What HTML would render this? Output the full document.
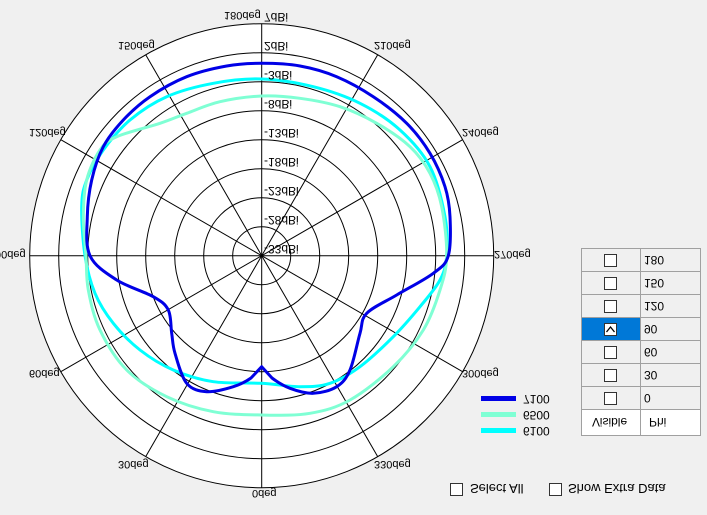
<!DOCTYPE html>
<html><head><meta charset="utf-8"><style>
html,body{margin:0;padding:0;background:#f0f0f0;width:707px;height:515px;overflow:hidden}
svg{display:block}
text{font-family:"Liberation Sans",sans-serif;fill:#000}
</style></head><body>
<svg id="s" width="707" height="515" viewBox="0 0 707 515">
<rect width="707" height="515" fill="#f0f0f0"/>
<g fill="none" stroke="#000" stroke-width="1">
<circle cx="261.7" cy="255.7" r="232" fill="#fff"/>
<circle cx="261.7" cy="255.7" r="203"/>
<circle cx="261.7" cy="255.7" r="174"/>
<circle cx="261.7" cy="255.7" r="145"/>
<circle cx="261.7" cy="255.7" r="116"/>
<circle cx="261.7" cy="255.7" r="87"/>
<circle cx="261.7" cy="255.7" r="58"/>
<circle cx="261.7" cy="255.7" r="29"/>
<line x1="29.7" y1="255.7" x2="493.7" y2="255.7"/>
<line x1="261.7" y1="23.7" x2="261.7" y2="487.7"/>
<line x1="145.7" y1="54.8" x2="377.7" y2="456.6"/>
<line x1="377.7" y1="54.8" x2="145.7" y2="456.6"/>
<line x1="60.8" y1="139.7" x2="462.6" y2="371.7"/>
<line x1="462.6" y1="139.7" x2="60.8" y2="371.7"/>
</g>
<g fill="none" stroke-width="3" stroke-linejoin="round" class="curves">
<polygon stroke="#00ffff" points="261.7,79 213.3,83.3 166.7,96.7 130,120 103.3,150 86.7,180 81.7,206.7 85,255.7 95,293.3 113.3,323.3 140,350 173.3,370 213.3,381.7 261.7,383.3 300,386.7 330,383.3 360,366.7 393.3,336.7 420,306.7 440,280 446.7,255.7 445,216.7 430,166.7 400,130 360,103.3 313.3,86.7"/>
<polygon stroke="#7fffd4" points="261.7,96 300,98.3 340,106.7 376.7,123.3 410,146.7 430,173.3 441.7,206.7 446.7,255.7 440,290 423.3,330 393.3,366.7 350,400 310,413.3 261.7,415 213.3,411.7 166.7,396.7 126.7,370 100,330 88.3,290 86,255.7 83.3,216.7 86.7,180 100,150 116.7,136.7 160,123.3 186.7,113.3 220,101.7"/>
<polygon stroke="#0000e6" points="90,255.7 87.3,216.7 91.7,180 103.3,146.7 123.3,120 150,96.7 186.7,76.7 226.7,66 261.7,63.3 300,66 336.7,76.7 373.3,96.7 406.7,123.3 430,153.3 445,186.7 450,216.7 448.3,255.7 433.3,273.3 396.7,295 366.7,313.3 360,333.3 350,370 336.7,386.7 313.3,393.3 290,388.3 272,378 261.7,366.7 251,378 233.3,386.7 206.7,391.7 186.7,383.3 175,353.3 171.7,333.3 168.3,310 153.3,296.7 116.7,280"/>
</g>
<g font-size="12">
<text transform="translate(264,13) scale(1,-1)">7dBi</text>
<text transform="translate(264,42) scale(1,-1)">2dBi</text>
<text transform="translate(264,71) scale(1,-1)">-3dBi</text>
<text transform="translate(264,100) scale(1,-1)">-8dBi</text>
<text transform="translate(264,129) scale(1,-1)">-13dBi</text>
<text transform="translate(264,158) scale(1,-1)">-18dBi</text>
<text transform="translate(264,187) scale(1,-1)">-23dBi</text>
<text transform="translate(264,216) scale(1,-1)">-28dBi</text>
<text transform="translate(264,245) scale(1,-1)">-33dBi</text>
</g>
<g font-size="11">
<text transform="translate(224,12) scale(1,-1)">180deg</text>
<text transform="translate(252,490) scale(1,-1)">0deg</text>
<text transform="translate(-5,251) scale(1,-1)">90deg</text>
<text transform="translate(494,251) scale(1,-1)">270deg</text>
<text transform="translate(118,461) scale(1,-1)">30deg</text>
<text transform="translate(374,461) scale(1,-1)">330deg</text>
<text transform="translate(29,370) scale(1,-1)">60deg</text>
<text transform="translate(462,370) scale(1,-1)">300deg</text>
<text transform="translate(29,129) scale(1,-1)">120deg</text>
<text transform="translate(462,129) scale(1,-1)">240deg</text>
<text transform="translate(118,42) scale(1,-1)">150deg</text>
<text transform="translate(374,42) scale(1,-1)">210deg</text>
</g>
<rect x="481" y="396" width="35" height="5" fill="#0000e6"/>
<rect x="481" y="412" width="35" height="5" fill="#7fffd4"/>
<rect x="481" y="428" width="35" height="5" fill="#00ffff"/>
<g font-size="12">
<text transform="translate(523,395) scale(1,-1)">7100</text>
<text transform="translate(523,411) scale(1,-1)">6500</text>
<text transform="translate(523,427) scale(1,-1)">6100</text>
</g>
<rect x="581.5" y="248.5" width="119" height="187" fill="#f0f0f0" stroke="#a0a0a0"/>
<rect x="582" y="409" width="118" height="26" fill="#fff"/>
<rect x="582" y="318" width="58" height="22" fill="#0078d7"/>
<g stroke="#a0a0a0" stroke-width="1">
<line x1="640.5" y1="248" x2="640.5" y2="435"/>
<line x1="581" y1="271.5" x2="701" y2="271.5"/>
<line x1="581" y1="294.5" x2="701" y2="294.5"/>
<line x1="581" y1="317.5" x2="701" y2="317.5"/>
<line x1="581" y1="340.5" x2="701" y2="340.5"/>
<line x1="581" y1="363.5" x2="701" y2="363.5"/>
<line x1="581" y1="386.5" x2="701" y2="386.5"/>
<line x1="581" y1="409.5" x2="701" y2="409.5"/>
</g>
<g fill="#fff" stroke="#333">
<rect x="604.5" y="254.5" width="12" height="12"/>
<rect x="604.5" y="277.5" width="12" height="12"/>
<rect x="604.5" y="300.5" width="12" height="12"/>
<rect x="604.5" y="323.5" width="12" height="12"/>
<rect x="604.5" y="346.5" width="12" height="12"/>
<rect x="604.5" y="369.5" width="12" height="12"/>
<rect x="604.5" y="392.5" width="12" height="12"/>
<rect x="450.5" y="483.5" width="12" height="12"/>
<rect x="549.5" y="483.5" width="12" height="12"/>
</g>
<polyline points="606.5,332 610.5,327 614.5,332" fill="none" stroke="#000" stroke-width="1.3"/>
<g font-size="12">
<text transform="translate(644,256) scale(1,-1)">180</text>
<text transform="translate(644,279) scale(1,-1)">150</text>
<text transform="translate(644,302) scale(1,-1)">120</text>
<text transform="translate(644,325) scale(1,-1)">90</text>
<text transform="translate(644,348) scale(1,-1)">60</text>
<text transform="translate(644,371) scale(1,-1)">30</text>
<text transform="translate(644,394) scale(1,-1)">0</text>
<text transform="translate(592,418) scale(1,-1)">Visible</text>
<text transform="translate(649,418) scale(1,-1)">Phi</text>
</g>
<g font-size="13">
<text transform="translate(470,484) scale(1,-1)">Select All</text>
<text transform="translate(568,484) scale(1,-1)">Show Extra Data</text>
</g>
</svg>
<script>
(function(){
var ns="http://www.w3.org/2000/svg";
document.querySelectorAll('.curves polygon').forEach(function(pg){
var pts=pg.getAttribute('points').trim().split(/\s+/).map(function(s){return s.split(',').map(Number);});
var n=pts.length,d="M"+pts[0][0]+","+pts[0][1];
for(var i=0;i<n;i++){
var p0=pts[(i-1+n)%n],p1=pts[i],p2=pts[(i+1)%n],p3=pts[(i+2)%n];
var t=(p1[0]==261.7&&p1[1]==366.7)||(p2[0]==261.7&&p2[1]==366.7);
var k=t?0:1/6;
d+=" C"+(p1[0]+(p2[0]-p0[0])*k)+","+(p1[1]+(p2[1]-p0[1])*k)+" "+(p2[0]-(p3[0]-p1[0])*k)+","+(p2[1]-(p3[1]-p1[1])*k)+" "+p2[0]+","+p2[1];
}
var path=document.createElementNS(ns,'path');
path.setAttribute('d',d+"Z");
path.setAttribute('stroke',pg.getAttribute('stroke'));
pg.parentNode.replaceChild(path,pg);
});
})();
</script>
</body></html>
